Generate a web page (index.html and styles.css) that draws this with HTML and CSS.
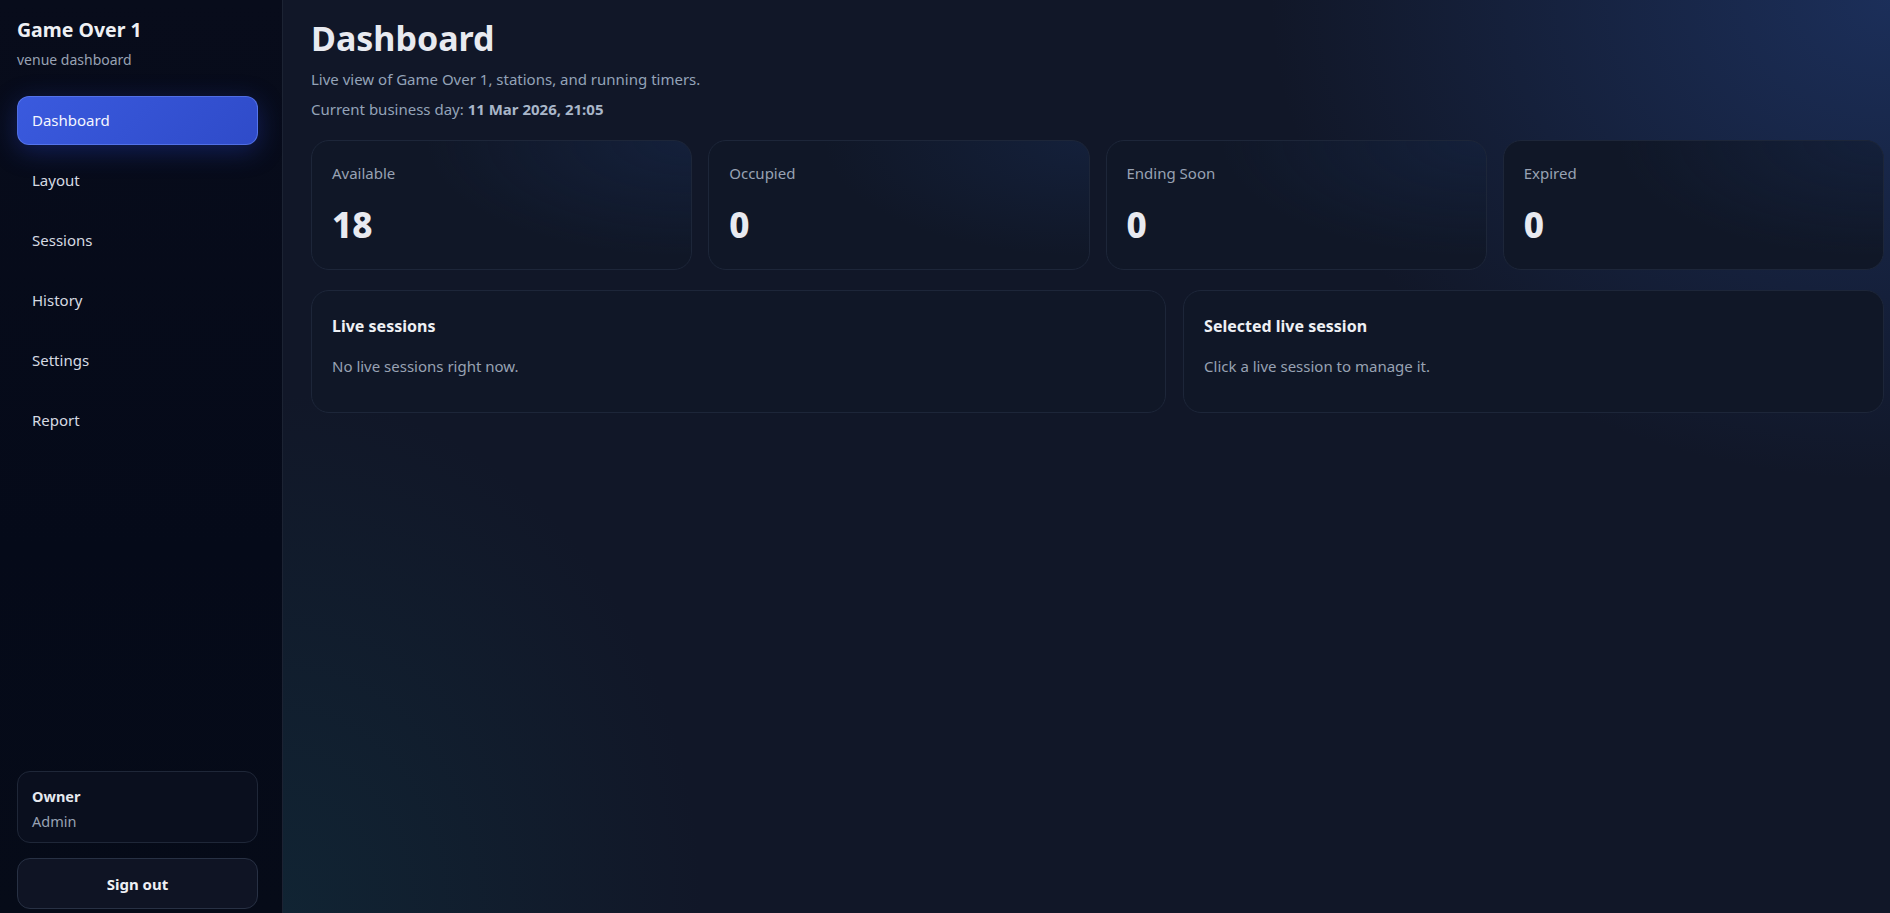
FILE: index.html
```html
<!DOCTYPE html>
<html>
<head>
    <title>Game Over 1 - Dashboard</title>
    <link rel="stylesheet" href="styles.css">
</head>
<body>

    <div class="app">

        <!-- Sidebar -->
        <aside class="sidebar">
            <div class="brand">Game Over 1</div>
            <div class="brand-sub">venue dashboard</div>

            <nav class="nav">
                <a href="#" class="nav-item active">Dashboard</a>
                <a href="#" class="nav-item">Layout</a>
                <a href="#" class="nav-item">Sessions</a>
                <a href="#" class="nav-item">History</a>
                <a href="#" class="nav-item">Settings</a>
                <a href="#" class="nav-item">Report</a>
            </nav>

            <div class="sidebar-bottom">
                <div class="user-box">
                    <div class="user-role">Owner</div>
                    <div class="user-name">Admin</div>
                </div>
                <button class="signout">Sign out</button>
            </div>
        </aside>

        <!-- Main content -->
        <main class="main">
            <h1>Dashboard</h1>
            <p class="subtitle">Live view of Game Over 1, stations, and running timers.</p>
            <p class="subtitle day">Current business day: <strong>11 Mar 2026, 21:05</strong></p>

            <div class="stats">
                <div class="stat">
                    <div class="stat-label">Available</div>
                    <div class="stat-value">18</div>
                </div>
                <div class="stat">
                    <div class="stat-label">Occupied</div>
                    <div class="stat-value">0</div>
                </div>
                <div class="stat">
                    <div class="stat-label">Ending Soon</div>
                    <div class="stat-value">0</div>
                </div>
                <div class="stat">
                    <div class="stat-label">Expired</div>
                    <div class="stat-value">0</div>
                </div>
            </div>

            <div class="panels">
                <div class="panel">
                    <h3>Live sessions</h3>
                    <p>No live sessions right now.</p>
                </div>
                <div class="panel">
                    <h3>Selected live session</h3>
                    <p>Click a live session to manage it.</p>
                </div>
            </div>
        </main>

    </div>

</body>
</html>
```

FILE: styles.css
```css
* {
    box-sizing: border-box;
}
html, body {
    margin: 0;
    height: 100%;
}
body {
    font-family: "Segoe UI", "Noto Sans", sans-serif;
    background: #111728;
    color: #e5e7eb;
    overflow: hidden;
}
.app {
    display: flex;
    height: 100vh;
}

/* Sidebar */
.sidebar {
    width: 283px;
    flex-shrink: 0;
    display: flex;
    flex-direction: column;
    padding: 17px 24px 4px 17px;
    background: linear-gradient(180deg, #080c1b 0%, #050a19 60%, #060b18 100%);
    border-right: 1px solid #1c2333;
}
.brand {
    font-size: 19.5px;
    font-weight: 700;
    line-height: 26px;
    color: #eef0f4;
}
.brand-sub {
    margin-top: 7px;
    font-size: 14px;
    line-height: 20px;
    color: #98a2b3;
}
.nav {
    display: flex;
    flex-direction: column;
    gap: 11px;
    margin-top: 26px;
}
.nav-item {
    display: block;
    height: 49px;
    line-height: 47px;
    padding: 0 14px;
    border: 1px solid transparent;
    border-radius: 12px;
    font-size: 15px;
    color: #d6dae2;
    text-decoration: none;
}
.nav-item.active {
    color: #f4f6ff;
    background: linear-gradient(135deg, #3a5ade 0%, #2f4bc9 100%);
    border-color: rgba(120, 150, 255, 0.45);
    box-shadow: 0 6px 26px rgba(40, 70, 210, 0.35);
}
.sidebar-bottom {
    margin-top: auto;
    display: flex;
    flex-direction: column;
    gap: 15px;
}
.user-box {
    padding: 14px 14px 11px;
    border: 1px solid #1f2738;
    border-radius: 13px;
    background: #0a0f1e;
}
.user-role {
    font-size: 14.5px;
    font-weight: 700;
    line-height: 20px;
    color: #e6e9ef;
}
.user-name {
    margin-top: 5px;
    font-size: 14.5px;
    line-height: 20px;
    color: #98a2b3;
}
.signout {
    height: 51px;
    border: 1px solid #283144;
    border-radius: 13px;
    background: #0f1424;
    color: #eef0f4;
    font-family: inherit;
    font-size: 15px;
    font-weight: 700;
    cursor: pointer;
}

/* Main */
.main {
    flex: 1;
    padding: 18px 6px 0 28px;
    background:
        radial-gradient(ellipse 620px 480px at 100% 0%, rgba(36, 66, 130, 0.55), transparent 100%),
        radial-gradient(ellipse 420px 520px at 0% 100%, rgba(16, 60, 72, 0.35), transparent 100%),
        #111728;
}
h1 {
    margin: 0;
    font-size: 34px;
    line-height: 40px;
    font-weight: 700;
    color: #e8eaf0;
}
.subtitle {
    margin: 10px 0 0;
    font-size: 15px;
    line-height: 22px;
    color: #94a3b8;
}
.subtitle.day {
    margin-top: 8px;
}
.subtitle strong {
    color: #a9b6c9;
}
.stats {
    display: grid;
    grid-template-columns: repeat(4, minmax(0, 1fr));
    gap: 16px;
    margin-top: 20px;
}
.stat {
    padding: 22px 20px 23px;
    border: 1px solid #1d2639;
    border-radius: 18px;
    background:
        radial-gradient(ellipse 70% 90% at 100% 0%, rgba(30, 56, 110, 0.28), transparent 100%),
        #101727;
}
.stat-label {
    font-size: 15px;
    line-height: 20px;
    color: #98a2b3;
}
.stat-value {
    margin-top: 21px;
    font-size: 35px;
    line-height: 42px;
    font-weight: 800;
    color: #e8eaf0;
}
.panels {
    display: grid;
    grid-template-columns: minmax(0, 1.22fr) minmax(0, 1fr);
    gap: 17px;
    margin-top: 20px;
}
.panel {
    padding: 24px 20px 35px;
    border: 1px solid #1d2639;
    border-radius: 18px;
    background: #101727;
}
.panel h3 {
    margin: 0;
    font-size: 16px;
    line-height: 22px;
    font-weight: 700;
    color: #eef0f4;
}
.panel p {
    margin: 18px 0 0;
    font-size: 15px;
    line-height: 22px;
    color: #98a2b3;
}
```
